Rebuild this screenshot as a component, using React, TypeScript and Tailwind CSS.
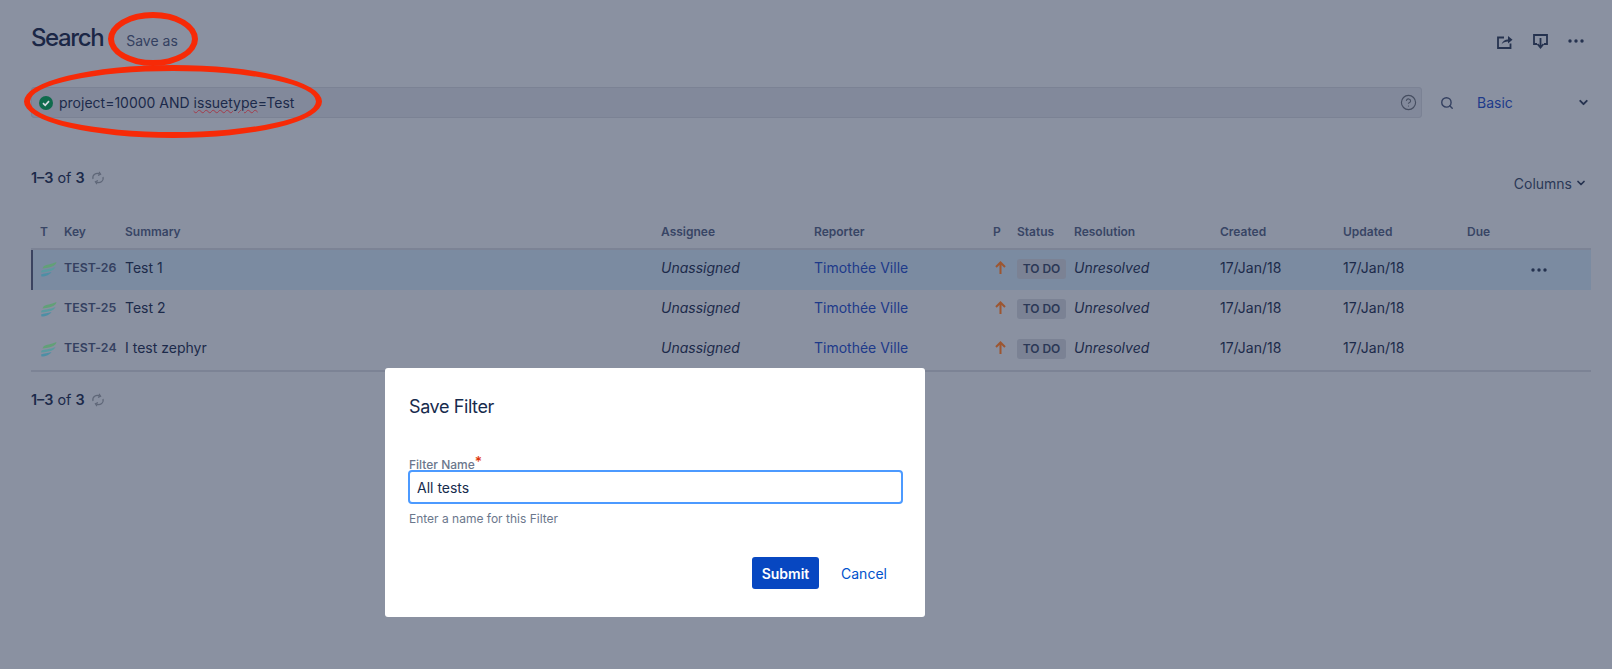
import { ChevronDown, HelpCircle, Search } from 'lucide-react';

const rows = [
  { key: 'TEST-26', summary: 'Test 1', active: true },
  { key: 'TEST-25', summary: 'Test 2', active: false },
  { key: 'TEST-24', summary: 'I test zephyr', active: false },
];

const columns = ['T', 'Key', 'Summary', 'Assignee', 'Reporter', 'P', 'Status', 'Resolution', 'Created', 'Updated', 'Due', ''];
const gridCols = 'grid grid-cols-[33px_61px_536px_153px_179px_24px_57px_146px_123px_124px_60px_1fr]';

function WingIcon() {
  return (
    <svg width="17" height="15" viewBox="0 0 17 15">
      <path d="M3.5 4.5 C6 2.5 11 2.5 16.5 0 C16 3 13 5.5 2.5 6.5 Z" fill="#62a077" />
      <path d="M1.5 8.5 C5 7 10 7.5 15.5 5 C14.5 8 10 10 1 10.5 Z" fill="#5a9aa0" />
      <path d="M1 12.5 C4 11 8 11.5 11.5 10 C10 12.5 6 14.5 1.5 14.5 Z" fill="#4d8fa5" />
    </svg>
  );
}

function RefreshIcon() {
  return (
    <svg width="14" height="14" viewBox="0 0 14 14" fill="none" stroke="#5f6778" strokeWidth="1.2">
      <path d="M2 8 C1 4 5 1 9 3" />
      <path d="M12 6 C13 10 9 13 5 11" />
      <path d="M8 0.8 L9.6 3.2 L7 4.4" />
      <path d="M6 13.2 L4.4 10.8 L7 9.6" />
    </svg>
  );
}

function Pager() {
  return (
    <div className="flex items-center gap-[6px] text-[14.4px] text-[#1c2a4a]">
      <span>
        <b className="font-semibold">1–3</b> of <b className="font-semibold">3</b>
      </span>
      <RefreshIcon />
    </div>
  );
}

function Dots() {
  return (
    <svg width="16" height="4" viewBox="0 0 16 4" fill="#25324f">
      <circle cx="2" cy="2" r="1.7" />
      <circle cx="8" cy="2" r="1.7" />
      <circle cx="14" cy="2" r="1.7" />
    </svg>
  );
}

export default function App() {
  return (
    <div className="relative h-[669px] w-[1612px] overflow-hidden bg-[#8a91a1] font-['Inter',sans-serif] text-[#1c2a4a]">
      <div className="px-[31px] pt-[22px] pr-[20px]">
        <div className="flex h-[32px] items-center">
          <h1 className="text-[24px] font-medium tracking-[-1.4px] text-[#1b2746]">Search</h1>
          <span className="ml-[23px] mt-[4px] text-[14px] text-[#344060]">Save as</span>
          <div className="ml-auto mt-[6px] flex items-center pr-[8px]">
            <svg width="16" height="15" viewBox="0 0 16 15" fill="none" stroke="#25324f" strokeWidth="1.8">
              <path d="M7 3.5 H1 V14 H13.5 V9.5" />
              <path d="M4.5 10.5 C5.5 7 8 5.6 11 5.6 V2 L15.5 5.8 L11 9.4 V7.6 C8.5 7.6 6 8.5 4.5 10.5 Z" fill="#25324f" stroke="none" />
            </svg>
            <svg width="15" height="15" viewBox="0 0 15 15" fill="none" stroke="#25324f" strokeWidth="1.8" className="ml-[20px]">
              <path d="M4 10 H1 V1 H14 V10 H11" />
              <path d="M7.5 4 V13 M4.5 10 L7.5 13.5 L10.5 10" />
            </svg>
            <div className="ml-[20px]">
              <Dots />
            </div>
          </div>
        </div>

        <div className="mt-[33px] flex h-[31px] items-center">
          <div className="flex h-[31px] w-[1391px] items-center rounded-[3px] border border-[#7b8294] bg-[#82899b] pl-[7px] pr-[4px]">
            <svg width="14" height="14" viewBox="0 0 14 14" className="shrink-0">
              <circle cx="7" cy="7" r="7" fill="#0f6b4d" />
              <path d="M4 7.2 L6.2 9.3 L10 5.2" fill="none" stroke="#d5dbe2" strokeWidth="1.7" />
            </svg>
            <span className="ml-[6px] text-[14px] text-[#1c2a4a]">
              project=10000 AND{' '}
              <span className="underline decoration-wavy decoration-[#a33a4a] decoration-1">issuetype</span>=Test
            </span>
            <HelpCircle size={17} strokeWidth={1.6} className="ml-auto text-[#454d60]" />
          </div>
          <Search size={14} strokeWidth={2.4} className="ml-[18px] text-[#344060]" />
          <span className="ml-[23px] text-[14px] text-[#1d3a8a]">Basic</span>
          <ChevronDown size={13} strokeWidth={3.5} className="ml-auto mr-[2px] text-[#25324f]" />
        </div>

        <div className="mt-[50px] flex h-[20px] items-center">
          <Pager />
        </div>

        <div className="mt-[-18px] flex h-[20px] items-center justify-end gap-[3px] pr-[5px] pt-[6px] text-[14px] text-[#2b3856]">
          Columns <ChevronDown size={12} strokeWidth={3.5} className="text-[#25324f]" />
        </div>

        <div className="w-[1560px]">
          <div className={`${gridCols} mt-[30px] h-[30px] items-center border-b-2 border-[#7c8395] pb-[5px] text-[12px] font-semibold text-[#384565]`}>
            {columns.map((c, i) => (
              <div key={i} className={i === 0 ? 'pl-[9px]' : ''}>
                {c}
              </div>
            ))}
          </div>
          {rows.map((r) => (
            <div
              key={r.key}
              className={`${gridCols} h-[40px] items-center pb-[5px] text-[14px] ${r.active ? 'bg-[#7b8ba1] shadow-[inset_2px_0_0_#3a4360]' : ''}`}
            >
              <div className="pl-[9px] pt-[3px]">
                <WingIcon />
              </div>
              <div className="pt-[1px] text-[12.3px] font-semibold tracking-[0.1px] text-[#344060]">{r.key}</div>
              <div>{r.summary}</div>
              <div className="italic">Unassigned</div>
              <div className="text-[#1d3a8a]">Timothée Ville</div>
              <div className="pl-[2px]">
                <svg width="11" height="13" viewBox="0 0 11 13" fill="none" stroke="#9d5630" strokeWidth="2">
                  <path d="M5.5 13 V2 M1 6 L5.5 1.5 L10 6" />
                </svg>
              </div>
              <div className="pt-[1px]">
                <span className="inline-block h-[20px] w-[49px] rounded-[3px] bg-[#7b8294] text-center text-[12px] font-semibold leading-[20px] text-[#2b3856]">
                  TO DO
                </span>
              </div>
              <div className="italic">Unresolved</div>
              <div>17/Jan/18</div>
              <div>17/Jan/18</div>
              <div />
              <div className="pl-[4px] pt-[4px]">{r.active && <Dots />}</div>
            </div>
          ))}
          <div className="border-t-2 border-[#7c8395]" />
        </div>

        <div className="mt-[17px]">
          <Pager />
        </div>
      </div>

      {/* annotations drawn over the page */}
      <div className="absolute left-[108px] top-[12px] h-[54px] w-[90px] rounded-[50%] border-[6px] border-[#f72a07]" />
      <div className="absolute left-[24px] top-[65px] h-[73px] w-[298px] rounded-[50%] border-[6px] border-[#f72a07]" />

      {/* Save Filter modal */}
      <div className="absolute left-[385px] top-[368px] h-[249px] w-[540px] rounded-[3px] bg-white px-[24px] pt-[27px] text-[#172b4d]">
        <h2 className="text-[18px] leading-[24px] tracking-[-0.4px]">Save Filter</h2>
        <label className="mt-[36px] block h-[16px] text-[12px] font-medium leading-[18px] text-[#6b778c]">
          Filter Name<span className="relative top-[-2px] text-[14px] text-[#de350b]">*</span>
        </label>
        <input
          readOnly
          value="All tests"
          className="ml-[-1px] mt-[-1px] block h-[34px] w-[495px] rounded-[4px] border-2 border-[#4c9aff] bg-white px-[7px] text-[14px] text-[#172b4d] outline-none"
        />
        <p className="mt-[6px] text-[12px] text-[#6b778c]">Enter a name for this Filter</p>
        <div className="mt-[29px] flex items-center justify-end pr-[5px]">
          <button className="h-[32px] w-[67px] rounded-[3px] bg-[#0747c1] text-[14px] font-semibold text-white">Submit</button>
          <button className="ml-[13px] h-[32px] w-[64px] text-[14px] text-[#0052cc]">Cancel</button>
        </div>
      </div>
    </div>
  );
}
